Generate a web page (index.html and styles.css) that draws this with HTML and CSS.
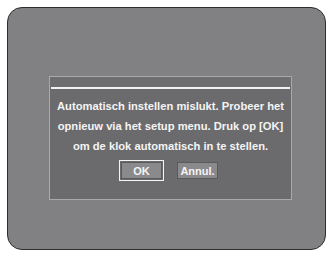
FILE: index.html
```html
<!DOCTYPE html>
<html>
<head>
<meta charset="utf-8">
<link rel="stylesheet" href="styles.css">
</head>
<body>
<div class="screen">
  <div class="dialog">
    <div class="title-bar"></div>
    <div class="divider"></div>
    <div class="body">
      <p class="msg">Automatisch instellen mislukt. Probeer het<br>opnieuw via het setup menu. Druk op [OK]<br>om de klok automatisch in te stellen.</p>
      <div class="buttons">
        <div class="btn btn-ok"><span>OK</span></div>
        <div class="btn btn-cancel">Annul.</div>
      </div>
    </div>
  </div>
</div>
</body>
</html>
```
FILE: styles.css
```css
html, body {
  margin: 0;
  padding: 0;
  background: #ffffff;
}
body {
  width: 331px;
  height: 256px;
  padding: 7px;
  box-sizing: border-box;
}
.screen {
  width: 319px;
  height: 243px;
  box-sizing: border-box;
  border: 1.5px solid #2e2e2e;
  border-radius: 15px;
  background: #818183;
  padding-top: 68px;
  padding-left: 41px;
}
.dialog {
  width: 243px;
  height: 124px;
  box-sizing: border-box;
  border: 1px solid #a9a9ab;
  background: #6b6b6d;
  display: flex;
  flex-direction: column;
}
.title-bar {
  height: 10px;
  background: #6e6e70;
}
.divider {
  height: 2px;
  background: #f2f2f2;
  margin: 0 1px;
}
.body {
  display: flex;
  flex-direction: column;
  align-items: center;
  padding-top: 7px;
}
.msg {
  margin: 0;
  font-family: "Liberation Sans", Arial, sans-serif;
  font-weight: bold;
  font-size: 11.2px;
  line-height: 20px;
  color: #f4f4f4;
  text-align: center;
  white-space: nowrap;
}
.buttons {
  display: flex;
  gap: 13px;
  margin-top: 4px;
  margin-right: 4px;
  align-items: center;
}
.btn {
  font-family: "Liberation Sans", Arial, sans-serif;
  font-weight: bold;
  font-size: 11px;
  color: #f4f4f4;
  box-sizing: border-box;
  display: flex;
  align-items: center;
  justify-content: center;
}
.btn-ok {
  width: 45px;
  height: 21px;
  border: 1px solid #f4f4f4;
  padding: 1px;
}
.btn-ok span {
  flex: 1;
  align-self: stretch;
  display: flex;
  align-items: center;
  justify-content: center;
  background: #8a8a8c;
  border: 1px solid #5a5a5c;
}
.btn-cancel {
  width: 41px;
  height: 17px;
  background: #8a8a8c;
  border: 1px solid #5a5a5c;
}
```
